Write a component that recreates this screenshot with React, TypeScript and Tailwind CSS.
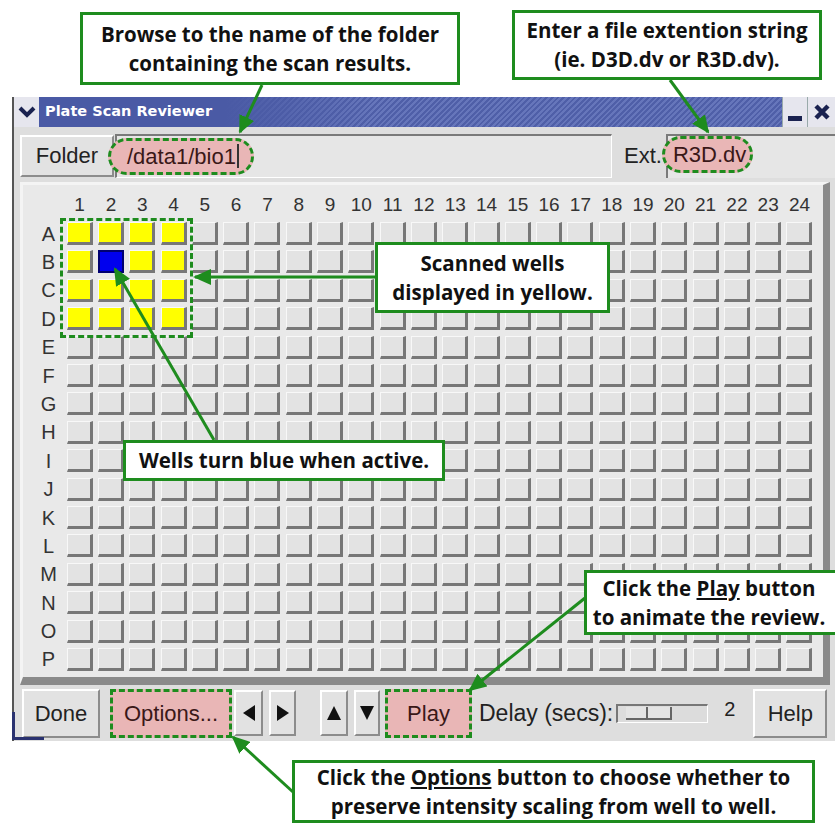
import React from "react";

const ROWS = "ABCDEFGHIJKLMNOP".split("");
const COLS = Array.from({ length: 24 }, (_, i) => i + 1);

function wellColor(r: number, c: number) {
  if (r === 1 && c === 1) return "blue";
  if (r < 4 && c < 4) return "yellow";
  return "gray";
}

function Well({ tone }: { tone: string }) {
  if (tone === "blue")
    return <div className="h-[23px] w-[26px] border-2 border-[#000070] bg-[#0000ee]" />;
  const face = tone === "yellow" ? "bg-[#ffff00]" : "bg-[#e3e3e3]";
  return (
    <div
      className={`h-[23px] w-[26px] border-t border-l border-t-[#f8f8f8] border-l-[#f8f8f8] border-r-[3px] border-b-[3px] border-r-[#777] border-b-[#777] ${face}`}
    />
  );
}

function RaisedButton({ className, children }: { className?: string; children: React.ReactNode }) {
  return (
    <div
      className={`flex items-center justify-center border-t-2 border-l-2 border-t-white border-l-white border-r-2 border-b-2 border-r-[#8c8c8c] border-b-[#8c8c8c] bg-[#e2e2e2] text-[22px] text-[#222] ${className ?? ""}`}
    >
      {children}
    </div>
  );
}

// small black triangle for the arrow buttons
function Tri({ dir }: { dir: "l" | "r" | "u" | "d" }) {
  const pts = {
    l: "14,1 14,17 2,9",
    r: "2,1 2,17 14,9",
    u: "1,16 15,16 8,2",
    d: "1,2 15,2 8,16",
  }[dir];
  return (
    <svg width="16" height="18" viewBox="0 0 16 18">
      <polygon points={pts} fill="#111" />
    </svg>
  );
}

function Callout({ className, children }: { className: string; children: React.ReactNode }) {
  return (
    <div
      className={`absolute flex flex-col items-center justify-center border-[3px] border-[#1e8c1e] bg-white text-center font-['Open_Sans',sans-serif] text-[20.5px] font-bold leading-[29px] text-[#111] ${className}`}
    >
      {children}
    </div>
  );
}

export default function App() {
  return (
    <div className="relative h-[825px] w-[835px] overflow-hidden bg-white font-['Liberation_Sans',Arial,sans-serif]">
      <div className="pl-[12px] pt-[97px]">
        <div className="flex h-[644px] w-[823px] flex-col border-l-2 border-l-[#555] bg-[#dedede]">
          {/* title bar */}
          <div className="flex h-[30px] items-stretch bg-[repeating-linear-gradient(135deg,#4f5fa8_0px,#4f5fa8_2px,#6676bb_2px,#6676bb_4px)]">
            <div className="flex w-[25px] items-center justify-center bg-[#e6e6ee]">
              <svg width="18" height="14" viewBox="0 0 18 14">
                <path d="M2 3 L9 10 L16 3" fill="none" stroke="#1a2250" strokeWidth="4" />
              </svg>
            </div>
            <div className="flex flex-1 items-center bg-[linear-gradient(90deg,#4a5aa5_0%,#4a5aa5_25%,transparent_45%)] pl-[6px] font-['DejaVu_Sans',sans-serif] text-[14.5px] font-bold text-white">
              Plate Scan Reviewer
            </div>
            <div className="flex w-[25px] items-end justify-center border-l border-[#9aa] bg-[#e6e6ee] pb-[6px]">
              <div className="h-[5px] w-[14px] bg-[#1a2250]" />
            </div>
            <div className="flex w-[28px] items-center justify-center border-l border-[#9aa] bg-[#e6e6ee]">
              <svg width="18" height="18" viewBox="0 0 18 18">
                <path d="M3 3 L15 15 M15 3 L3 15" stroke="#1a2250" strokeWidth="4.5" />
              </svg>
            </div>
          </div>

          {/* folder row */}
          <div className="flex h-[55px] items-center pl-[6px] pt-[2px]">
            <RaisedButton className="h-[42px] w-[94px]">Folder</RaisedButton>
            <div className="relative ml-[1px] flex h-[44px] w-[497px] items-center border-t-2 border-l-2 border-t-[#7a7a7a] border-l-[#7a7a7a] border-r border-b border-r-white border-b-white bg-[#e6e6e6]">
              <div className="absolute left-[-9px] top-[2px] flex h-[37px] w-[146px] items-center rounded-full border-[3px] border-dashed border-[#1e8c1e] bg-[#e9b6b6] pl-[16px] text-[22px] text-[#3a1818]">
                /data1/bio1
                <span className="ml-[1px] h-[24px] w-[2px] bg-[#333]" />
              </div>
            </div>
            <div className="ml-[12px] text-[22px] text-[#222]">Ext.</div>
            <div className="relative ml-[4px] flex h-[44px] flex-1 items-center border-t-2 border-l-2 border-t-[#7a7a7a] border-l-[#7a7a7a] bg-[#e6e6e6]">
              <div className="absolute left-[-6px] top-0 flex h-[37px] w-[91px] items-center rounded-full border-[3px] border-dashed border-[#1e8c1e] bg-[#e9b6b6] pl-[8px] text-[22px] text-[#3a1818]">
                R3D.dv
              </div>
            </div>
          </div>

          {/* plate panel */}
          <div className="ml-[6px] h-[503px] w-[810px] border-t-[3px] border-l-[3px] border-t-[#f4f4f4] border-l-[#f4f4f4] border-r-[7px] border-b-[8px] border-r-[#8a8a8a] border-b-[#8a8a8a] bg-[#e9e9e9] pl-[10px] pt-[6px]">
            <div className="grid grid-cols-[31px_repeat(24,31.3px)] grid-rows-[repeat(17,28.4px)] text-[#333]">
              <div />
              {COLS.map((c) => (
                <div key={c} className="flex items-center justify-center text-[19px]">
                  {c}
                </div>
              ))}
              {ROWS.map((r, ri) => (
                <React.Fragment key={r}>
                  <div className="flex items-center justify-center text-[20px]">{r}</div>
                  {COLS.map((c, ci) => (
                    <div key={c} className="flex items-center justify-center">
                      <Well tone={wellColor(ri, ci)} />
                    </div>
                  ))}
                </React.Fragment>
              ))}
            </div>
          </div>

          {/* toolbar */}
          <div className="flex flex-1 items-center pl-[8px]">
            <RaisedButton className="h-[49px] w-[78px]">Done</RaisedButton>
            <div className="ml-[10px] flex h-[49px] w-[122px] items-center justify-center border-[3px] border-dashed border-[#1e8c1e] bg-[#e9b6b6] text-[22px] text-[#3a1818]">
              Options...
            </div>
            <RaisedButton className="ml-[2px] h-[46px] w-[29px]">
              <Tri dir="l" />
            </RaisedButton>
            <RaisedButton className="ml-[6px] h-[46px] w-[27px]">
              <Tri dir="r" />
            </RaisedButton>
            <RaisedButton className="ml-[24px] h-[46px] w-[28px]">
              <Tri dir="u" />
            </RaisedButton>
            <RaisedButton className="ml-[6px] h-[46px] w-[26px]">
              <Tri dir="d" />
            </RaisedButton>
            <div className="ml-[5px] flex h-[49px] w-[87px] items-center justify-center border-[3px] border-dashed border-[#1e8c1e] bg-[#e9b6b6] text-[22px] text-[#3a1818]">
              Play
            </div>
            <div className="ml-[7px] text-[23px] text-[#222]">Delay (secs):</div>
            <div className="ml-[3px] flex h-[19px] w-[92px] items-center border-t-2 border-l-2 border-t-[#777] border-l-[#777] border-r border-b border-r-white border-b-white bg-[#dcdcdc] pl-[8px]">
              <div className="flex h-[13px] w-[46px] border-r-2 border-b-2 border-r-[#666] border-b-[#666] bg-[#e4e4e4]">
                <div className="w-1/2 border-r-2 border-r-[#666]" />
              </div>
            </div>
            <div className="ml-[16px] mb-[8px] text-[20px] text-[#222]">2</div>
            <RaisedButton className="ml-[18px] h-[49px] w-[74px]">Help</RaisedButton>
          </div>
        </div>
      </div>

      {/* window resize corner */}
      <div className="absolute left-[12px] top-[712px] h-[28px] w-[32px] border-l-[3px] border-b-[3px] border-[#2a3270]" />

      {/* annotation: scanned wells outline */}
      <div className="absolute left-[60px] top-[218px] h-[120px] w-[133px] border-[3px] border-dashed border-[#1e8c1e]" />

      {/* arrows */}
      <svg className="pointer-events-none absolute inset-0" width="835" height="825">
        <defs>
          <marker id="ah" markerUnits="userSpaceOnUse" markerWidth="18" markerHeight="16" refX="16" refY="8" orient="auto">
            <path d="M0 0 L18 8 L0 16 Z" fill="#1e8c1e" />
          </marker>
        </defs>
        <g stroke="#1e8c1e" strokeWidth="3" fill="none">
          <line x1="262" y1="85" x2="240" y2="132" markerEnd="url(#ah)" />
          <line x1="670" y1="80" x2="708" y2="132" markerEnd="url(#ah)" />
          <line x1="375" y1="277" x2="195" y2="277" markerEnd="url(#ah)" />
          <line x1="214" y1="440" x2="115" y2="269" markerEnd="url(#ah)" />
          <line x1="585" y1="598" x2="470" y2="690" markerEnd="url(#ah)" />
          <line x1="293" y1="792" x2="233" y2="737" markerEnd="url(#ah)" />
        </g>
      </svg>

      <Callout className="left-[80px] top-[12px] h-[73px] w-[380px]">
        <span>Browse to the name of the folder</span>
        <span>containing the scan results.</span>
      </Callout>
      <Callout className="left-[512px] top-[10px] h-[70px] w-[310px]">
        <span>Enter a file extention string</span>
        <span>(ie. D3D.dv or R3D.dv).</span>
      </Callout>
      <Callout className="left-[375px] top-[242px] h-[71px] w-[235px]">
        <span>Scanned wells</span>
        <span>displayed in yellow.</span>
      </Callout>
      <Callout className="left-[123px] top-[440px] h-[41px] w-[322px]">
        <span>Wells turn blue when active.</span>
      </Callout>
      <Callout className="left-[584px] top-[570px] h-[65px] w-[260px] pr-[10px]">
        <span>
          Click the <span className="underline">Play</span> button
        </span>
        <span>to animate the review.</span>
      </Callout>
      <Callout className="left-[292px] top-[760px] h-[63px] w-[523px]">
        <span className="whitespace-nowrap">
          Click the <span className="underline">Options</span> button to choose whether to
        </span>
        <span className="whitespace-nowrap">preserve intensity scaling from well to well.</span>
      </Callout>
    </div>
  );
}
